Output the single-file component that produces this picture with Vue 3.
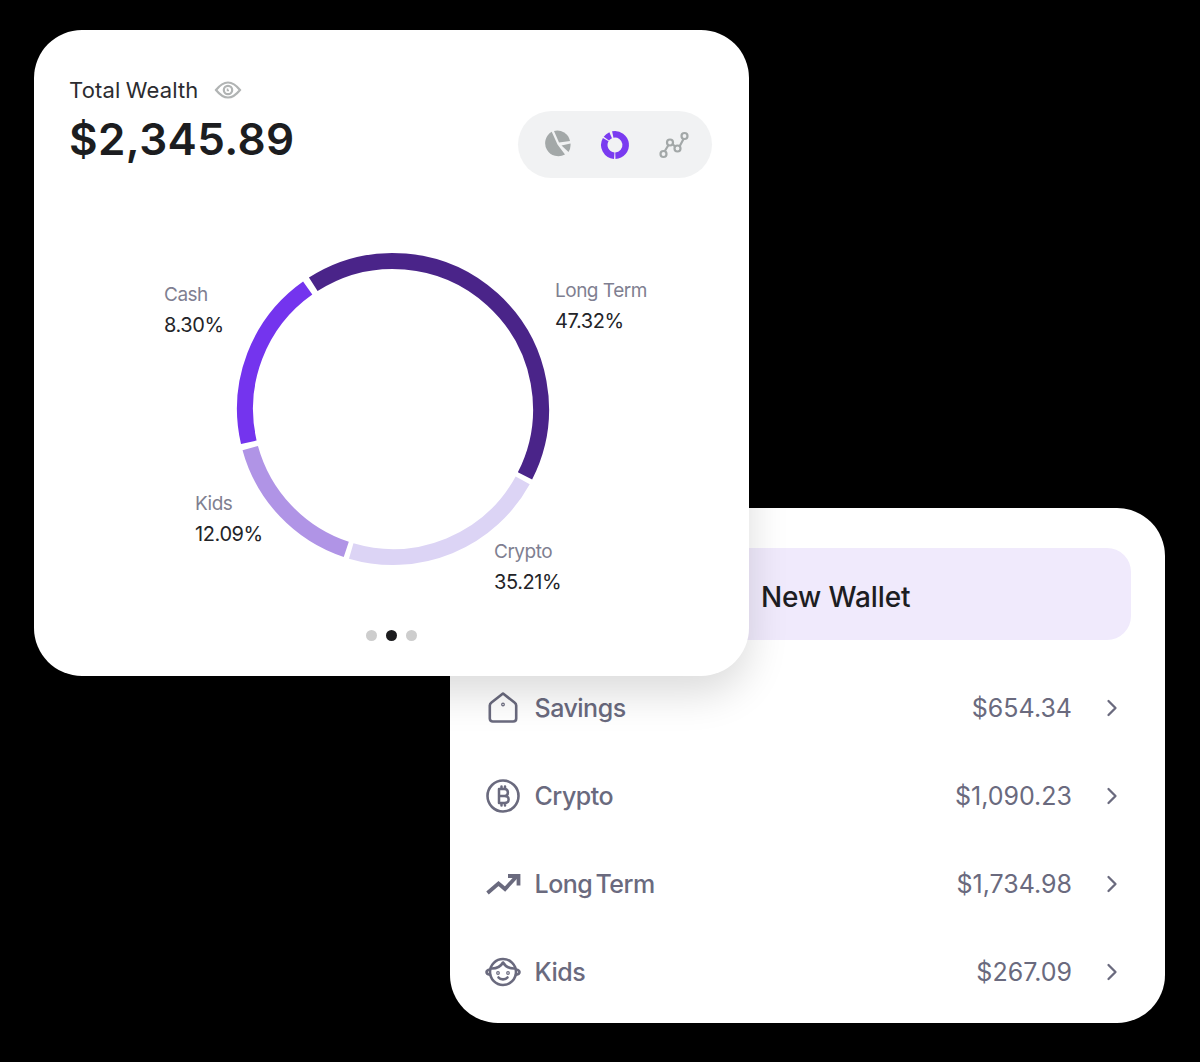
<script setup>
const cx = 160
const cy = 160
const r = 148

function arc(start, end) {
  const pt = (deg) => {
    const a = (deg - 90) * Math.PI / 180
    return `${(cx + r * Math.cos(a)).toFixed(2)} ${(cy + r * Math.sin(a)).toFixed(2)}`
  }
  return `M${pt(start)} A${r} ${r} 0 ${end - start > 180 ? 1 : 0} 1 ${pt(end)}`
}

const segments = [
  { name: 'Long Term', start: -32.6, end: 116.9, color: '#4a2489' },
  { name: 'Crypto', start: 118.8, end: 196.4, color: '#dcd4f5' },
  { name: 'Kids', start: 198.4, end: 254.7, color: '#b094e6' },
  { name: 'Cash', start: 257.0, end: 324.8, color: '#7434ee' },
]

const labels = [
  { name: 'Cash', value: '8.30%', cls: 'lbl-cash' },
  { name: 'Long Term', value: '47.32%', cls: 'lbl-long' },
  { name: 'Kids', value: '12.09%', cls: 'lbl-kids' },
  { name: 'Crypto', value: '35.21%', cls: 'lbl-crypto' },
]

const wallets = [
  { name: 'Savings', amount: '$654.34', icon: 'house' },
  { name: 'Crypto', amount: '$1,090.23', icon: 'coin' },
  { name: 'Long Term', amount: '$1,734.98', icon: 'trend' },
  { name: 'Kids', amount: '$267.09', icon: 'kid' },
]
</script>

<template>
  <div class="stage">
    <section class="wealth-card">
      <header class="wealth-head">
        <div>
          <div class="wealth-title">
            <span>Total Wealth</span>
            <svg width="28" height="20" viewBox="0 0 28 20" fill="none" stroke="#b1b4b4" stroke-width="2.200">
              <path d="M2 10 C6 5 10 2.500 14 2.500 C18 2.500 22 5 26 10 C22 15 18 17.500 14 17.500 C10 17.500 6 15 2 10 Z"/>
              <circle cx="14" cy="10" r="4.200"/>
              <path d="M13.500 8.500 V10.500 H15" stroke-width="1.500"/>
            </svg>
          </div>
          <div class="wealth-amount">$2,345.89</div>
        </div>
        <div class="chart-switch">
          <svg width="30" height="30" viewBox="0 0 30 30" fill="#a3a8a8">
            <path d="M10.700 1.700 A12.800 12.800 0 1 0 24 24.500 L16.500 14.500 Z"/>
            <path d="M13 1 A13 13 0 0 1 29 11 L18 12.500 Z"/>
            <path d="M20.500 15.500 L29.500 13.500 A13 13 0 0 1 27.500 22 Z"/>
          </svg>
          <svg width="30" height="30" viewBox="0 0 30 30" fill="none" stroke="#7a3bf0" stroke-width="6.500">
            <path d="M12.780 4.530 A10.700 10.700 0 1 1 15.370 25.690"/>
            <path d="M14.250 25.670 A10.700 10.700 0 0 1 5.730 9.650"/>
            <path d="M6.340 8.710 A10.700 10.700 0 0 1 10.650 5.220"/>
          </svg>
          <svg width="30" height="30" viewBox="0 0 30 30" fill="none" stroke="#a3a8a8" stroke-width="2.200">
            <path d="M5.500 21.500 L9.500 15 M13 13.500 L16.500 17 M20.500 16.500 L24.500 9"/>
            <circle cx="4.500" cy="24" r="3"/>
            <circle cx="11" cy="12.500" r="3"/>
            <circle cx="18.500" cy="18.500" r="3"/>
            <circle cx="25.500" cy="6" r="3"/>
          </svg>
        </div>
      </header>

      <div class="chart">
        <svg class="donut" width="320" height="320" viewBox="0 0 320 320" fill="none">
          <path
            v-for="seg in segments"
            :key="seg.name"
            :d="arc(seg.start, seg.end)"
            :stroke="seg.color"
            stroke-width="16"
          />
        </svg>
        <div v-for="l in labels" :key="l.name" class="chart-label" :class="l.cls">
          <div class="chart-label-name">{{ l.name }}</div>
          <div class="chart-label-value">{{ l.value }}</div>
        </div>
      </div>

      <div class="dots">
        <span class="dot" />
        <span class="dot dot--on" />
        <span class="dot" />
      </div>
    </section>

    <section class="wallet-card">
      <button class="new-wallet">New Wallet</button>
      <ul class="wallet-list">
        <li v-for="w in wallets" :key="w.name" class="wallet-row">
          <svg class="wallet-icon" width="36" height="36" viewBox="0 0 36 36" fill="none" stroke="#6a6a7e" stroke-width="2.600" stroke-linecap="round" stroke-linejoin="round">
            <template v-if="w.icon === 'house'">
              <path d="M18 3.500 L29.500 12.500 C30.800 13.500 31.200 14.300 31.200 15.500 V28.500 C31.200 30.500 30 31.500 28.200 31.500 H7.800 C6 31.500 4.800 30.500 4.800 28.500 V15.500 C4.800 14.300 5.200 13.500 6.500 12.500 Z"/>
              <circle cx="18" cy="14.500" r=".6" />
            </template>
            <template v-else-if="w.icon === 'coin'">
              <circle cx="18" cy="18" r="15.500"/>
              <path stroke-width="2.500" d="M14 11 V25 M14 11 H19.500 C24 11 24 18 19.500 18 H14 M19.500 18 C25 18 25 25 19.500 25 H14 M16.500 8.500 V11 M20 8.500 V11 M16.500 25 V27.500 M20 25 V27.500"/>
            </template>
            <template v-else-if="w.icon === 'trend'">
              <path stroke-width="3.800" stroke-linecap="butt" stroke-linejoin="miter" d="M2.500 27 L13.500 17.500 L20 23 L32 10"/>
              <path stroke-width="3.800" stroke-linecap="butt" stroke-linejoin="miter" d="M23 10 H33.500 V19.500"/>
            </template>
            <template v-else>
              <circle cx="18" cy="18" r="13"/>
              <path d="M5 15.500 C2.500 16 1.500 17 1.500 18 C1.500 19.500 3 20.500 5 20.800 M31 15.500 C33.500 16 34.500 17 34.500 18 C34.500 19.500 33 20.500 31 20.800"/>
              <path d="M7 14.500 C12 14.500 16 12 18 8.500 C20 12 24 14.500 29 14.500"/>
              <path d="M13.500 23.500 C15.500 26 20.500 26 22.500 23.500"/>
              <circle cx="13" cy="19" r=".6"/>
              <circle cx="23" cy="19" r=".6"/>
            </template>
          </svg>
          <span class="wallet-name">{{ w.name }}</span>
          <span class="wallet-amount">{{ w.amount }}</span>
          <svg class="chevron" width="12" height="18" viewBox="0 0 12 18" fill="none" stroke="#6a6a7e" stroke-width="2.300" stroke-linecap="round" stroke-linejoin="round">
            <path d="M2.500 2 L9.500 9 L2.500 16"/>
          </svg>
        </li>
      </ul>
    </section>
  </div>
</template>

<style>
html, body { background: #000; }
</style>

<style scoped>
.stage {
  height: 1062px;
  padding-top: 30px;
  box-sizing: border-box;
  overflow: hidden;
  background: #000;
  font-family: Inter, "Liberation Sans", sans-serif;
}

/* top card */
.wealth-card {
  position: relative;
  z-index: 2;
  width: 715px;
  height: 646px;
  margin-left: 34px;
  padding: 46px 37px 0 35px;
  box-sizing: border-box;
  background: #fff;
  border-radius: 48px;
  box-shadow: 0 18px 40px rgba(0, 0, 0, 0.14);
}

.wealth-head {
  display: flex;
  justify-content: space-between;
  align-items: flex-start;
}

.wealth-title {
  display: flex;
  align-items: center;
  gap: 16px;
  height: 27px;
  font-size: 22px;
  letter-spacing: 0.15px;
  word-spacing: -1px;
  color: #2b2c30;
}

.wealth-amount {
  margin-top: 9px;
  font-size: 44px;
  line-height: 54px;
  font-weight: 600;
  letter-spacing: 0.4px;
  color: #1c1d20;
}

.chart-switch {
  display: flex;
  align-items: center;
  gap: 29px;
  margin-top: 35px;
  width: 194px;
  height: 67px;
  padding-left: 23px;
  box-sizing: border-box;
  background: #f1f2f3;
  border-radius: 34px;
}

.chart {
  position: relative;
  height: 320px;
  margin-top: 71px;
}

.donut {
  display: block;
  margin-left: 164px;
}

.chart-label {
  position: absolute;
  white-space: nowrap;
}

.chart-label-name {
  font-size: 19px;
  line-height: 24px;
  letter-spacing: -0.5px;
  color: #7f7f91;
}

.chart-label-value {
  margin-top: 6px;
  font-size: 20px;
  line-height: 24px;
  letter-spacing: -0.4px;
  color: #232428;
}

.lbl-cash { left: 95px; top: 34px; }
.lbl-long { left: 486px; top: 30px; }
.lbl-kids { left: 126px; top: 243px; }
.lbl-crypto { left: 425px; top: 291px; }

.dots {
  display: flex;
  justify-content: center;
  gap: 9px;
  margin-top: 61px;
  padding-left: 2px;
}

.dot {
  width: 11px;
  height: 11px;
  border-radius: 50%;
  background: #cdcdcd;
}

.dot--on { background: #1c1c1e; }

/* wallet card */
.wallet-card {
  position: relative;
  width: 715px;
  height: 515px;
  margin: -168px 0 0 450px;
  padding: 40px 34px 0;
  box-sizing: border-box;
  background: #fff;
  border-radius: 48px;
}

.new-wallet {
  display: block;
  width: 647px;
  height: 92px;
  padding: 5px 0 0 277px;
  border: none;
  border-radius: 24px;
  background: #f0eafc;
  font-family: inherit;
  font-size: 28px;
  font-weight: 500;
  letter-spacing: -0.1px;
  text-align: left;
  color: #1d1d22;
}

.wallet-list {
  margin: 24px 0 0;
  padding: 0;
  list-style: none;
}

.wallet-row {
  display: flex;
  align-items: center;
  height: 88px;
  font-size: 25px;
  color: #6a6a7e;
}

.wallet-icon { flex-shrink: 0; margin-left: 1px; }

.wallet-name {
  margin-left: 13.5px;
  font-weight: 500;
  letter-spacing: -0.5px;
  word-spacing: -3px;
}

.wallet-amount { margin-left: auto; }

.chevron {
  flex-shrink: 0;
  margin: 0 13px 0 34px;
}
</style>
